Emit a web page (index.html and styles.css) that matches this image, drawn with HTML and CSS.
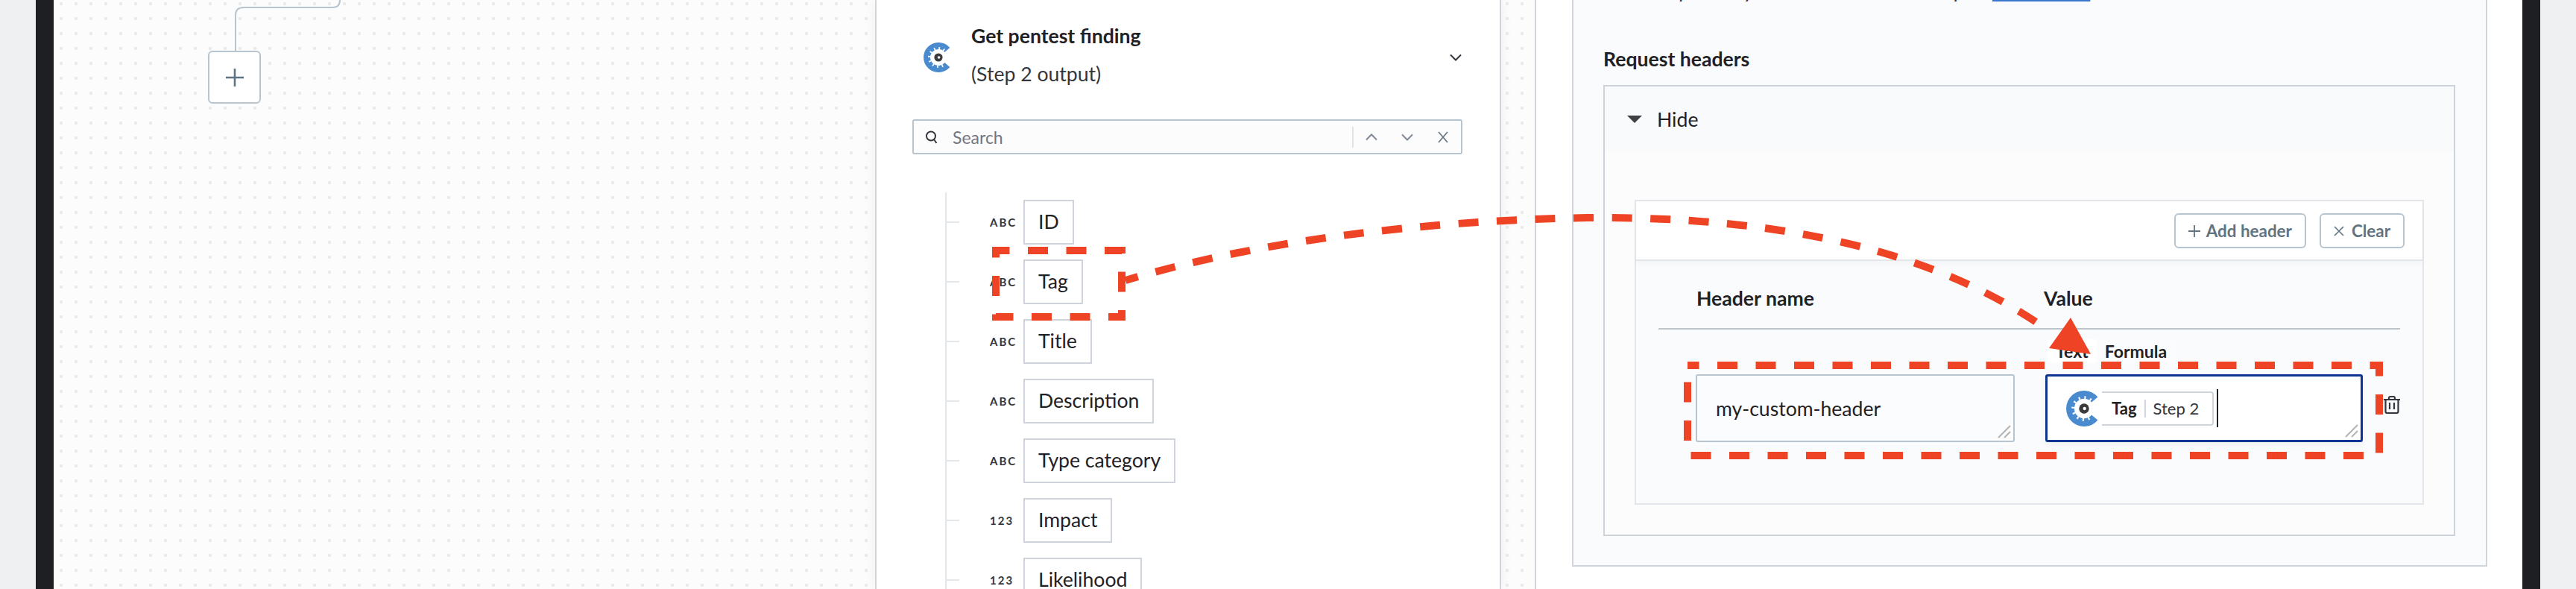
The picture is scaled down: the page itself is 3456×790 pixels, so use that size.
FILE: index.html
```html
<!DOCTYPE html>
<html lang="en">
<head>
    <meta charset="UTF-8">
    <title>Workflow step editor</title>
    <link rel="stylesheet" href="styles.css">
</head>
<body>
    <svg class="defs" width="0" height="0">
        <symbol id="logo" viewBox="-20 -20 40 40">
            <path d="M11.9 -10A15.5 15.5 0 1 0 11.9 10" fill="none" stroke="#4a8bd0" stroke-width="9"/>
            <circle r="11.5" fill="none" stroke="#fff" stroke-width="5" stroke-dasharray="1.6 4.42"/>
            <circle r="5.6" fill="#3d3a3c"/>
            <circle r="1.8" cx="0.6" fill="#fff"/>
        </symbol>
    </svg>

    <div class="frame">
        <div class="canvas">
            <svg class="wire" width="400" height="70">
                <path d="M244 68V20Q244 10 255 10H374Q384 10 384 0" fill="none" stroke="#b8c4ce" stroke-width="2"/>
            </svg>
            <div class="add-node">
                <svg width="26" height="26" viewBox="0 0 26 26"><path d="M13 1V25M1 13H25" stroke="#5f7380" stroke-width="2.6"/></svg>
            </div>
        </div>

        <div class="panel">
            <div class="step-head">
                <svg class="step-logo" width="40" height="40"><use href="#logo"/></svg>
                <div class="step-text">
                    <div class="step-title">Get pentest finding</div>
                    <div class="step-sub">(Step 2 output)</div>
                </div>
                <svg class="step-toggle" width="16" height="10" viewBox="0 0 16 10"><path d="M1 1.5L8 8.5L15 1.5" fill="none" stroke="#33363c" stroke-width="2"/></svg>
            </div>

            <div class="search">
                <svg width="18" height="20" viewBox="0 0 18 20"><circle cx="8" cy="8.5" r="6" fill="none" stroke="#33363c" stroke-width="2"/><path d="M12 13L15.5 18" stroke="#33363c" stroke-width="2"/></svg>
                <span class="search-hint">Search</span>
                <div class="search-tools">
                    <span class="tool"><svg width="16" height="10" viewBox="0 0 16 10"><path d="M1 8.5L8 1.5L15 8.5" fill="none" stroke="#7d8a94" stroke-width="2"/></svg></span>
                    <span class="tool"><svg width="16" height="10" viewBox="0 0 16 10"><path d="M1 1.5L8 8.5L15 1.5" fill="none" stroke="#7d8a94" stroke-width="2"/></svg></span>
                    <span class="tool"><svg width="14" height="16" viewBox="0 0 14 16"><path d="M1 1L13 15M13 1L1 15" fill="none" stroke="#5f7380" stroke-width="1.6"/></svg></span>
                </div>
            </div>

            <ul class="tree">
                <li><span class="kind">ABC</span><span class="pill">ID</span></li>
                <li><span class="kind">ABC</span><span class="pill">Tag</span></li>
                <li><span class="kind">ABC</span><span class="pill">Title</span></li>
                <li><span class="kind">ABC</span><span class="pill">Description</span></li>
                <li><span class="kind">ABC</span><span class="pill">Type category</span></li>
                <li><span class="kind">123</span><span class="pill">Impact</span></li>
                <li><span class="kind">123</span><span class="pill">Likelihood</span></li>
            </ul>
        </div>

        <div class="detail">
            <div class="detail-box">
                <p class="clip-line">Optionally add more to the API input. <a href="#">Learn more</a></p>
                <div class="section-label">Request headers</div>
                <div class="accordion">
                    <div class="acc-head"><span class="caret-down"></span>Hide</div>
                    <div class="acc-body">
                        <div class="card">
                            <div class="card-bar">
                                <button class="btn"><svg width="16" height="16" viewBox="0 0 16 16"><path d="M8 0V16M0 8H16" stroke="#5f7380" stroke-width="1.8"/></svg>Add header</button>
                                <button class="btn btn-clear"><svg width="14" height="14" viewBox="0 0 14 14"><path d="M1 1L13 13M13 1L1 13" stroke="#5f7380" stroke-width="1.6"/></svg>Clear</button>
                            </div>
                            <div class="headers">
                                <div class="headers-top">
                                    <div>Header name</div>
                                    <div>Value</div>
                                </div>
                                <div class="headers-row">
                                    <div class="field">
                                        my-custom-header
                                        <svg class="grip" width="18" height="18" viewBox="0 0 18 18"><path d="M1 17L17 1M9 17L17 9" stroke="#b3b3b3" stroke-width="2"/></svg>
                                    </div>
                                    <div class="value-col">
                                        <div class="tabs"><span class="tab tab-on">Text</span><span class="tab">Formula</span></div>
                                        <div class="field field-focus">
                                            <svg class="token-logo" width="48" height="48"><use href="#logo"/></svg>
                                            <span class="token"><b>Tag</b><i></i>Step 2</span>
                                            <span class="text-caret"></span>
                                            <svg class="grip" width="18" height="18" viewBox="0 0 18 18"><path d="M1 17L17 1M9 17L17 9" stroke="#b3b3b3" stroke-width="2"/></svg>
                                        </div>
                                    </div>
                                    <svg class="trash" width="22" height="24" viewBox="0 0 22 24"><path d="M0 5H22M7 5V3Q7 1 9 1H13Q15 1 15 3V5M2.5 5V21Q2.5 23 4.5 23H17.5Q19.5 23 19.5 21V5M8 9V18M14 9V18" fill="none" stroke="#33363c" stroke-width="2.2"/></svg>
                                </div>
                            </div>
                        </div>
                    </div>
                </div>
            </div>
        </div>

        <svg class="marks" width="3456" height="790" viewBox="0 0 3456 790">
            <g fill="none" stroke="#ee4324" stroke-width="10" stroke-dasharray="27 24.5">
                <path d="M1336 336H1505V425H1336Z" stroke-dashoffset="8.5"/>
                <path d="M2264 490H3192V611H2264Z" stroke-dashoffset="11.5"/>
                <path d="M1510 376C1680 325 1900 296 2130 292C2400 290 2600 340 2745 441" stroke-dashoffset="9.5"/>
            </g>
            <polygon points="2778,426 2749,467 2805,475" fill="#ee4324"/>
        </svg>
    </div>
</body>
</html>
```

FILE: styles.css
```css
* {
    box-sizing: border-box;
}
html, body {
    margin: 0;
    height: 790px;
    overflow: hidden;
}
body {
    width: 3456px;
    padding: 0 48px;
    background-color: #eff0f2;
    font-family: Lato, "Noto Sans", sans-serif;
    font-size: 26.6px;
    color: #1f2125;
}
.defs {
    position: absolute;
}
.frame {
    display: flex;
    height: 790px;
    border-left: 24px solid #1e1f22;
    border-right: 24px solid #1e1f22;
    background-color: #fcfcfd;
    background-image: radial-gradient(circle at 10px 5px, #e9eaec 2px, transparent 2.6px);
    background-size: 20px 20px;
}

/* canvas */
.canvas {
    position: relative;
    width: 1102px;
    flex: none;
}
.wire {
    position: absolute;
    left: 0;
    top: 0;
}
.add-node {
    position: absolute;
    left: 207px;
    top: 68px;
    width: 71px;
    height: 71px;
    display: flex;
    align-items: center;
    justify-content: center;
    background-color: #fff;
    border: 2px solid #b8c4ce;
    border-radius: 6px;
}

/* output panel */
.panel {
    width: 840px;
    flex: none;
    padding-left: 48px;
    padding-right: 50px;
    overflow: hidden;
    background-color: #fff;
    border-left: 2px solid #d0d5dc;
    border-right: 2px solid #d0d5dc;
    box-shadow: 0 0 16px rgba(0, 0, 0, 0.06);
}
.step-head {
    display: flex;
    align-items: center;
    padding: 23px 0 0 15px;
}
.step-logo {
    flex: none;
    margin-top: 6px;
}
.step-text {
    margin-left: 24px;
    line-height: 51px;
}
.step-title {
    font-weight: 700;
}
.step-sub {
    color: #33363c;
}
.step-toggle {
    margin-top: 6px;
    margin-left: auto;
    margin-right: 1px;
}
.search {
    display: flex;
    align-items: center;
    height: 47px;
    margin-top: 35px;
    padding-left: 15px;
    background-color: #fcfcfd;
    border: 2px solid #b8c4ce;
    border-radius: 3px;
}
.search-hint {
    margin-left: 19px;
    font-size: 23px;
    color: #737680;
}
.search-tools {
    display: flex;
    margin-left: auto;
    border-left: 2px solid #dfe3e7;
}
.tool {
    display: flex;
    align-items: center;
    justify-content: center;
    width: 48px;
    height: 28px;
}
.tree {
    list-style: none;
    margin: 51px 0 0 44px;
    padding: 10px 0 0;
    border-left: 2px solid #e3e7eb;
}
.tree li {
    display: flex;
    align-items: center;
    margin-bottom: 20px;
}
.tree li::before {
    content: "";
    width: 17px;
    height: 2px;
    background-color: #e3e7eb;
}
.kind {
    width: 34px;
    margin-left: 41px;
    margin-right: 11px;
    font-size: 15px;
    font-weight: 700;
    letter-spacing: 2px;
    color: #33363c;
}
.pill {
    height: 60px;
    padding: 0 18px;
    line-height: 54px;
    background-color: #fff;
    border: 2px solid #cfd4dc;
}

/* right panel */
.detail {
    flex: 1;
    margin-left: 45px;
    padding-left: 48px;
    background-color: #fff;
    border-left: 2px solid #d0d5dc;
}
.detail-box {
    display: flow-root;
    width: 1228px;
    height: 760px;
    padding-left: 40px;
    background-color: #fafbfd;
    border-left: 2px solid #d0d5dc;
    border-right: 2px solid #d0d5dc;
    border-bottom: 2px solid #d0d5dc;
}
.clip-line {
    height: 34px;
    margin: -30px 0 0;
    padding-left: 80px;
    line-height: 34px;
    color: #33363c;
}
.clip-line a {
    color: #3a76cf;
    text-decoration-thickness: 3px;
}
.section-label {
    margin-top: 57px;
    line-height: 36px;
    font-weight: 700;
}
.accordion {
    width: 1143px;
    height: 605px;
    margin-top: 17px;
    background-color: #fcfcfd;
    border: 2px solid #ccd3da;
}
.acc-head {
    display: flex;
    align-items: center;
    height: 87px;
    padding-left: 30px;
    background-color: #f9fafb;
}
.caret-down {
    width: 0;
    height: 0;
    margin-right: 20px;
    border-top: 10px solid #3d4045;
    border-left: 10px solid transparent;
    border-right: 10px solid transparent;
}
.acc-body {
    padding: 65px 40px 0;
}
.card {
    height: 409px;
    background-color: #fafbfd;
    border: 2px solid #e3e7eb;
}
.card-bar {
    display: flex;
    justify-content: flex-end;
    gap: 18px;
    height: 80px;
    padding: 16px 24px 0 0;
    background-color: #fff;
    border-bottom: 2px solid #e3e7eb;
    box-shadow: 0 4px 8px rgba(0, 0, 0, 0.03);
}
.btn {
    display: flex;
    align-items: center;
    gap: 8px;
    height: 47px;
    padding: 0 17px;
    font: 700 22.4px Lato, "Noto Sans", sans-serif;
    color: #5f7380;
    background-color: #fff;
    border: 2px solid #b8c4ce;
    border-radius: 6px;
}
.btn-clear {
    gap: 10px;
}
.headers {
    margin: 0 30px;
}
.headers-top {
    display: grid;
    grid-template-columns: 466px 1fr;
    height: 92px;
    padding: 32px 0 0 51px;
    line-height: 36px;
    font-weight: 700;
    border-bottom: 2px solid #bcc3c9;
}
.headers-row {
    display: grid;
    grid-template-columns: 428px 426px 22px;
    align-items: end;
    column-gap: 41px;
    padding: 13px 0 0 50px;
}
.tabs {
    display: flex;
    height: 32px;
    margin: 0 0 15px 3px;
    font-size: 23px;
    font-weight: 700;
}
.tab {
    padding: 0 11px;
    line-height: 32px;
    background-color: #fbfcfd;
    border-radius: 3px;
}
.tab-on {
    background-color: #fff;
}
.field {
    position: relative;
    display: flex;
    align-items: center;
    height: 91px;
    padding: 0 0 0 25px;
    background-color: #fbfcfd;
    border: 2px solid #b8c4ce;
    border-radius: 3px;
}
.field-focus {
    padding-left: 25px;
    background-color: #fff;
    border: 3px solid #0d3590;
    box-shadow: 0 4px 10px rgba(0, 0, 0, 0.05);
}
.grip {
    position: absolute;
    right: 3px;
    bottom: 3px;
}
.token-logo {
    flex: none;
    background-color: #fff;
}
.token {
    display: flex;
    align-items: center;
    height: 46px;
    padding-left: 13px;
    padding-right: 18px;
    font-size: 22px;
    color: #33363c;
    border: 2px solid #cfd4dc;
    border-left: none;
    border-radius: 0 4px 4px 0;
}
.token b {
    color: #1f2125;
}
.token i {
    width: 2px;
    height: 24px;
    margin: 0 10px;
    background-color: #cfd4dc;
}
.text-caret {
    width: 2px;
    height: 51px;
    margin-left: 4px;
    background-color: #1f2125;
}
.trash {
    margin-left: -13px;
    margin-bottom: 38px;
}

/* annotation drawn on top of the screenshot */
.marks {
    position: absolute;
    left: 0;
    top: 0;
    pointer-events: none;
}
```
